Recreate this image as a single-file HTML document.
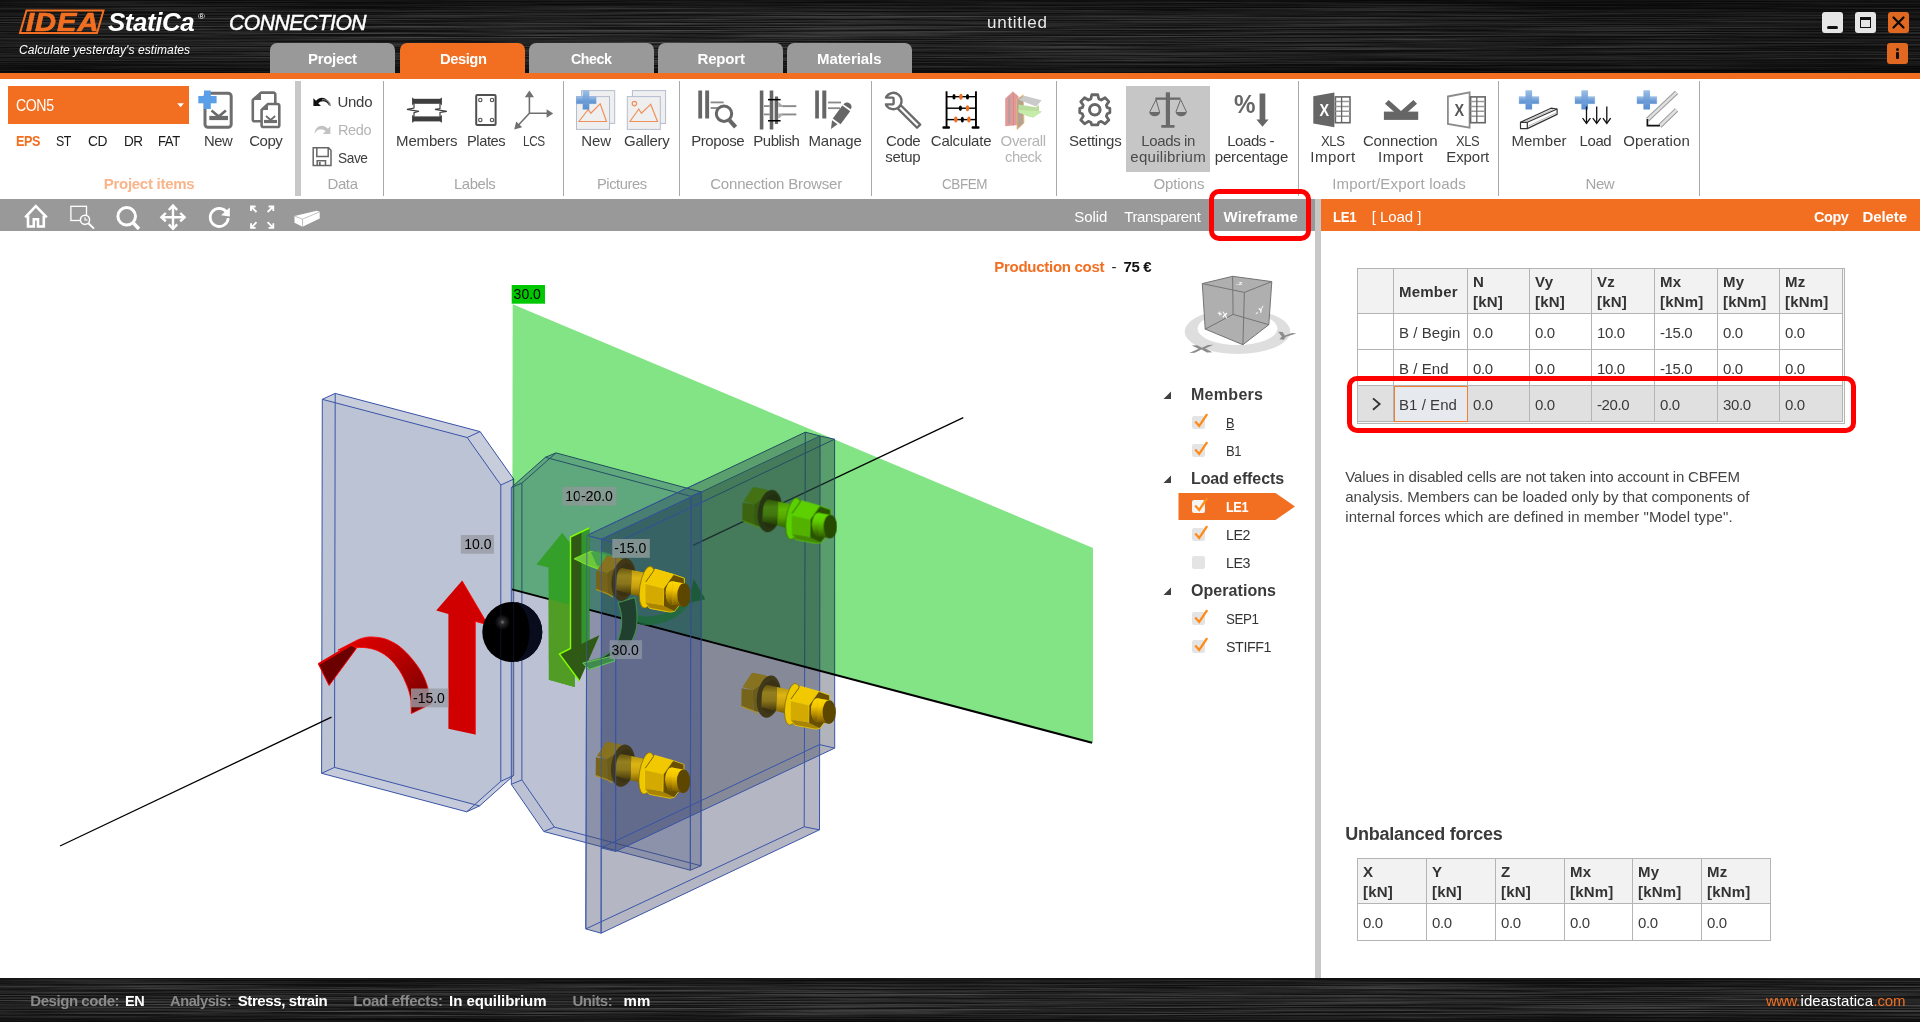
<!DOCTYPE html>
<html lang="en">
<head>
<meta charset="utf-8">
<title>IDEA StatiCa Connection - untitled</title>
<style>
*{box-sizing:border-box;margin:0;padding:0}
html,body{width:1920px;height:1022px;overflow:hidden;background:#fff}
body{position:relative;font-family:"Liberation Sans",sans-serif;font-size:15px;color:#333}
.abs{position:absolute}
.t{position:absolute;white-space:nowrap;line-height:1;display:block}
#titlebar{position:absolute;left:0;top:0;width:1920px;height:73px;background:#101010;overflow:hidden}
#orangeline{position:absolute;left:0;top:73px;width:1920px;height:6px;background:#f26f21}
.tab{position:absolute;top:43px;height:31px;width:125px;border-radius:7px 7px 0 0;background:#999}
.tab.active{background:#f26f21}
#ribbon{position:absolute;left:0;top:79px;width:1920px;height:120px;background:#fff}
.vsep{position:absolute;top:81px;width:1px;height:115px;background:#a9a9a9}
#toolbar{position:absolute;left:0;top:199px;width:1315px;height:32px;background:#999}
#splitter{position:absolute;left:1315px;top:199px;width:6px;height:779px;background:#c8c8c8}
#panelhead{position:absolute;left:1321px;top:199px;width:599px;height:32px;background:#f26f21}
#status{position:absolute;left:0;top:978px;width:1920px;height:44px;background:#141414;overflow:hidden}
table.grid{position:absolute;border-collapse:collapse;table-layout:fixed}
table.grid td,table.grid th{border:1px solid #b4b4b4;text-align:left;font-weight:400;overflow:hidden;white-space:nowrap;padding:0}
table.grid th{background:#f2f2f2;font-weight:700}
.hl{position:absolute;border:5px solid #ff0000;border-radius:10px}
.cb{position:absolute;width:13px;height:13px;background:#e4e4e4;border-radius:2px}
table.grid .c{display:block;position:relative;top:1px;padding-left:5px;font-size:15px;line-height:20px;letter-spacing:-0.4px;color:#3a3a3a}
table.grid .c.n{letter-spacing:0.05px}
table.grid th .c{color:#333;letter-spacing:0.2px}
</style>
</head>
<body>

<div id="titlebar">
<svg class="abs" style="left:0;top:0" width="1920" height="73" viewBox="0 0 1920 73">
<defs>
<filter id="brush" x="0" y="0" width="100%" height="100%" color-interpolation-filters="sRGB">
<feTurbulence type="fractalNoise" baseFrequency="0.004 0.8" numOctaves="4" seed="7" result="n"/>
<feColorMatrix in="n" type="matrix" values="0 0 0 0 0.36  0 0 0 0 0.36  0 0 0 0 0.36  1.5 0 0 0 -0.5"/>
</filter>
<linearGradient id="tbv" x1="0" y1="0" x2="0" y2="1"><stop offset="0" stop-color="#000" stop-opacity=".45"/><stop offset=".25" stop-color="#000" stop-opacity="0"/><stop offset=".8" stop-color="#000" stop-opacity="0"/><stop offset="1" stop-color="#000" stop-opacity=".6"/></linearGradient>
<linearGradient id="tbh" x1="0" y1="0" x2="1" y2="0"><stop offset="0" stop-color="#000" stop-opacity=".2"/><stop offset=".35" stop-color="#000" stop-opacity="0"/><stop offset=".7" stop-color="#000" stop-opacity=".15"/><stop offset="1" stop-color="#000" stop-opacity=".35"/></linearGradient>
</defs>
<rect width="1920" height="73" fill="#121212"/>
<rect width="1920" height="73" fill="#6a6a6a" filter="url(#brush)"/>
<rect width="1920" height="73" fill="url(#tbv)"/>
<rect width="1920" height="73" fill="url(#tbh)"/>
</svg>
<svg class="abs" style="left:18px;top:9px" width="90" height="26" viewBox="0 0 90 26">
<polygon points="8.5,1.5 85.5,1.5 79,24 2,24" fill="none" stroke="#f26f21" stroke-width="2"/>
</svg><span class="t" style="left:25.5px;top:9px;font-size:26px;font-weight:700;color:#f26f21;letter-spacing:0.90px;transform:scaleX(1.118);transform-origin:0 0;font-style:italic;-webkit-text-stroke:0.7px #f26f21;">IDEA</span><span class="t" style="left:108.0px;top:9px;font-size:26px;font-weight:700;color:#fff;letter-spacing:-0.45px;transform:scaleX(0.996);transform-origin:0 0;font-style:italic;">StatiCa</span><span class="t" style="left:198.0px;top:13px;font-size:8px;color:#fff;letter-spacing:0.90px;transform:scaleX(1.185);transform-origin:0 0;">&reg;</span><span class="t" style="left:229.0px;top:12px;font-size:22px;color:#fff;letter-spacing:-0.45px;transform:scaleX(0.956);transform-origin:0 0;font-style:italic;-webkit-text-stroke:0.5px #fff;">CONNECTION</span><span class="t" style="left:19.0px;top:44px;font-size:12px;color:#fff;letter-spacing:0.09px;font-style:italic;">Calculate yesterday's estimates</span><span class="t" style="left:987.0px;top:14px;font-size:17px;color:#e8e8e8;letter-spacing:0.74px;">untitled</span><div class="abs" style="left:1822px;top:12px;width:21px;height:21px;background:#e6e6e6;border-radius:3px"><div class="abs" style="left:5px;top:14px;width:11px;height:3px;border-radius:1.5px;background:#111"></div></div>
<div class="abs" style="left:1855px;top:12px;width:21px;height:21px;background:#e6e6e6;border-radius:3px"><div class="abs" style="left:5px;top:5px;width:11px;height:11px;border:1.5px solid #111;border-top-width:3px"></div></div>
<div class="abs" style="left:1888px;top:12px;width:21px;height:21px;background:#e06820;border-radius:3px"><svg class="abs" style="left:0;top:0" width="21" height="21"><path d="M5.5 5.5 L15.5 15.5 M15.5 5.5 L5.5 15.5" stroke="#0a0a0a" stroke-width="2.2" stroke-linecap="round"/></svg></div>
<div class="abs" style="left:1887px;top:43px;width:21px;height:21px;background:#e06820;border-radius:3px"><div class="abs" style="left:9px;top:5px;width:3px;height:3px;border-radius:1.5px;background:#111"></div><div class="abs" style="left:9px;top:9px;width:3px;height:7px;border-radius:1px;background:#111"></div></div>
</div><div class="tab" style="left:270px"></div><span class="t" style="left:308.1px;top:51px;font-size:15px;font-weight:700;color:#fff;letter-spacing:-0.34px;">Project</span><div class="tab active" style="left:400px"></div><span class="t" style="left:439.7px;top:51px;font-size:15px;font-weight:700;color:#fff;letter-spacing:-0.45px;transform:scaleX(0.982);transform-origin:0 0;">Design</span><div class="tab" style="left:529px"></div><span class="t" style="left:571.0px;top:51px;font-size:15px;font-weight:700;color:#fff;letter-spacing:-0.45px;transform:scaleX(0.948);transform-origin:0 0;">Check</span><div class="tab" style="left:658px"></div><span class="t" style="left:697.5px;top:51px;font-size:15px;font-weight:700;color:#fff;letter-spacing:-0.17px;">Report</span><div class="tab" style="left:787px"></div><span class="t" style="left:817.0px;top:51px;font-size:15px;font-weight:700;color:#fff;letter-spacing:-0.07px;">Materials</span><div id="orangeline"></div><div id="ribbon"></div><div class="abs" style="left:8px;top:86px;width:181px;height:38px;background:#f26f21"></div><span class="t" style="left:16.2px;top:98px;font-size:16px;color:#fff;letter-spacing:-0.45px;transform:scaleX(0.882);transform-origin:0 0;">CON5</span><svg class="abs" style="left:176.5px;top:102.6px" width="9" height="5"><polygon points="0.3,0.3 6.9,0.3 3.6,4.2" fill="#fff"/></svg><span class="t" style="left:16.3px;top:133px;font-size:15px;font-weight:700;color:#f26f21;letter-spacing:-0.45px;transform:scaleX(0.841);transform-origin:0 0;">EPS</span><span class="t" style="left:56.3px;top:133px;font-size:15px;color:#1a1a1a;letter-spacing:-0.45px;transform:scaleX(0.823);transform-origin:0 0;">ST</span><span class="t" style="left:88.0px;top:133px;font-size:15px;color:#1a1a1a;letter-spacing:-0.45px;transform:scaleX(0.919);transform-origin:0 0;">CD</span><span class="t" style="left:123.7px;top:133px;font-size:15px;color:#1a1a1a;letter-spacing:-0.45px;transform:scaleX(0.900);transform-origin:0 0;">DR</span><span class="t" style="left:158.3px;top:133px;font-size:15px;color:#1a1a1a;letter-spacing:-0.45px;transform:scaleX(0.871);transform-origin:0 0;">FAT</span><span class="t" style="left:203.7px;top:133px;font-size:15px;color:#3c3c3c;letter-spacing:-0.45px;transform:scaleX(0.989);transform-origin:0 0;">New</span><span class="t" style="left:249.2px;top:133px;font-size:15px;color:#3c3c3c;letter-spacing:-0.45px;">Copy</span><span class="t" style="left:103.7px;top:176px;font-size:15px;font-weight:700;color:#f9b48a;letter-spacing:-0.27px;">Project items</span><div class="abs" style="left:295px;top:81px;width:6px;height:115px;background:#c8c8c8"></div><span class="t" style="left:337.5px;top:94px;font-size:15px;color:#3c3c3c;letter-spacing:-0.29px;">Undo</span><span class="t" style="left:337.5px;top:122px;font-size:15px;color:#b4b4b4;letter-spacing:-0.45px;transform:scaleX(0.971);transform-origin:0 0;">Redo</span><span class="t" style="left:337.5px;top:150px;font-size:15px;color:#3c3c3c;letter-spacing:-0.45px;transform:scaleX(0.913);transform-origin:0 0;">Save</span><span class="t" style="left:327.5px;top:176px;font-size:15px;color:#a6a6a6;letter-spacing:-0.40px;">Data</span><div class="vsep" style="left:383px"></div><div class="vsep" style="left:563px"></div><div class="vsep" style="left:679px"></div><div class="vsep" style="left:871px"></div><div class="vsep" style="left:1056px"></div><div class="vsep" style="left:1298px"></div><div class="vsep" style="left:1498px"></div><div class="vsep" style="left:1699px"></div><span class="t" style="left:396.1px;top:133px;font-size:15px;color:#3c3c3c;letter-spacing:-0.17px;">Members</span><span class="t" style="left:467.2px;top:133px;font-size:15px;color:#3c3c3c;letter-spacing:-0.45px;transform:scaleX(0.978);transform-origin:0 0;">Plates</span><span class="t" style="left:523.2px;top:133px;font-size:15px;color:#3c3c3c;letter-spacing:-0.45px;transform:scaleX(0.785);transform-origin:0 0;">LCS</span><span class="t" style="left:581.3px;top:133px;font-size:15px;color:#3c3c3c;letter-spacing:-0.16px;">New</span><span class="t" style="left:624.0px;top:133px;font-size:15px;color:#3c3c3c;letter-spacing:-0.29px;">Gallery</span><span class="t" style="left:691.2px;top:133px;font-size:15px;color:#3c3c3c;letter-spacing:-0.41px;">Propose</span><span class="t" style="left:753.2px;top:133px;font-size:15px;color:#3c3c3c;letter-spacing:-0.43px;">Publish</span><span class="t" style="left:808.4px;top:133px;font-size:15px;color:#3c3c3c;letter-spacing:-0.16px;">Manage</span><span class="t" style="left:886.0px;top:133px;font-size:15px;color:#3c3c3c;letter-spacing:-0.39px;">Code</span><span class="t" style="left:885.3px;top:149px;font-size:15px;color:#3c3c3c;letter-spacing:-0.33px;">setup</span><span class="t" style="left:930.8px;top:133px;font-size:15px;color:#3c3c3c;letter-spacing:-0.23px;">Calculate</span><span class="t" style="left:1069.1px;top:133px;font-size:15px;color:#3c3c3c;letter-spacing:-0.23px;">Settings</span><span class="t" style="left:1227.2px;top:133px;font-size:15px;color:#3c3c3c;letter-spacing:-0.44px;">Loads -</span><span class="t" style="left:1214.7px;top:149px;font-size:15px;color:#3c3c3c;letter-spacing:-0.15px;">percentage</span><span class="t" style="left:1320.7px;top:133px;font-size:15px;color:#3c3c3c;letter-spacing:-0.45px;transform:scaleX(0.874);transform-origin:0 0;">XLS</span><span class="t" style="left:1310.3px;top:149px;font-size:15px;color:#3c3c3c;letter-spacing:0.46px;">Import</span><span class="t" style="left:1362.9px;top:133px;font-size:15px;color:#3c3c3c;letter-spacing:-0.12px;">Connection</span><span class="t" style="left:1378.0px;top:149px;font-size:15px;color:#3c3c3c;letter-spacing:0.46px;">Import</span><span class="t" style="left:1455.9px;top:133px;font-size:15px;color:#3c3c3c;letter-spacing:-0.45px;transform:scaleX(0.863);transform-origin:0 0;">XLS</span><span class="t" style="left:1446.3px;top:149px;font-size:15px;color:#3c3c3c;letter-spacing:-0.09px;">Export</span><span class="t" style="left:1511.4px;top:133px;font-size:15px;color:#3c3c3c;letter-spacing:0.04px;">Member</span><span class="t" style="left:1579.6px;top:133px;font-size:15px;color:#3c3c3c;letter-spacing:-0.45px;">Load</span><span class="t" style="left:1623.3px;top:133px;font-size:15px;color:#3c3c3c;letter-spacing:0.07px;">Operation</span><span class="t" style="left:1000.6px;top:133px;font-size:15px;color:#b4b4b4;letter-spacing:-0.32px;">Overall</span><span class="t" style="left:1005.3px;top:149px;font-size:15px;color:#b4b4b4;letter-spacing:-0.45px;transform:scaleX(0.990);transform-origin:0 0;">check</span><div class="abs" style="left:1126px;top:86px;width:84px;height:86px;background:#c6c6c6"></div><span class="t" style="left:1141.3px;top:133px;font-size:15px;color:#4a4a4a;letter-spacing:-0.37px;">Loads in</span><span class="t" style="left:1130.3px;top:149px;font-size:15px;color:#4a4a4a;letter-spacing:0.28px;">equilibrium</span><span class="t" style="left:454.2px;top:176px;font-size:15px;color:#a6a6a6;letter-spacing:-0.45px;transform:scaleX(0.994);transform-origin:0 0;">Labels</span><span class="t" style="left:597.4px;top:176px;font-size:15px;color:#a6a6a6;letter-spacing:-0.45px;transform:scaleX(0.980);transform-origin:0 0;">Pictures</span><span class="t" style="left:710.2px;top:176px;font-size:15px;color:#a6a6a6;letter-spacing:-0.18px;">Connection Browser</span><span class="t" style="left:942.0px;top:176px;font-size:15px;color:#a6a6a6;letter-spacing:-0.45px;transform:scaleX(0.899);transform-origin:0 0;">CBFEM</span><span class="t" style="left:1153.5px;top:176px;font-size:15px;color:#a6a6a6;letter-spacing:-0.12px;">Options</span><span class="t" style="left:1332.2px;top:176px;font-size:15px;color:#a6a6a6;letter-spacing:0.20px;">Import/Export loads</span><span class="t" style="left:1585.6px;top:176px;font-size:15px;color:#a6a6a6;letter-spacing:-0.45px;">New</span><svg class="abs" id="ribicons" style="left:0;top:79px" width="1920" height="120" viewBox="0 79 1920 120" font-family="Liberation Sans, sans-serif">
<defs>
<linearGradient id="plusg" x1="0" y1="0" x2="0" y2="1"><stop offset="0" stop-color="#9dbfe6"/><stop offset=".5" stop-color="#6f9fd8"/><stop offset="1" stop-color="#5b8fd0"/></linearGradient>
<g id="plus"><rect x="0" y="6.4" width="19.8" height="7.1" fill="url(#plusg)"/><rect x="6.4" y="0" width="6.6" height="19.2" fill="url(#plusg)"/><rect x="0" y="6.4" width="19.8" height="7.1" fill="none" stroke="#7fa8dc" stroke-width=".6" opacity=".6"/></g>
</defs>
<!-- New connection -->
<g fill="none" stroke="#6e6e6e">
<rect x="205" y="93.3" width="26.2" height="34" rx="3" stroke-width="3"/>
<path d="M209.3,118h18.7" stroke-width="4.2" stroke="#6a6a6a"/>
<path d="M211.5,110.5l7.2,6 7.2,-6" stroke-width="2.6" stroke="#6a6a6a"/>
</g>
<rect x="198.3" y="96" width="18.3" height="7.3" fill="#5b9fe8"/><rect x="204" y="90.5" width="6.8" height="18.5" fill="#5b9fe8"/>
<!-- Copy -->
<g fill="#fff" stroke="#6e6e6e" stroke-width="2.6" stroke-linejoin="round">
<path d="M252.8,100 L261,92.6 H273.5 a1.8,1.8 0 0 1 1.8,1.8 V119.4 a1.8,1.8 0 0 1 -1.8,1.8 H254.6 a1.8,1.8 0 0 1 -1.8,-1.8 Z"/>
<path d="M252.8,100 L261,92.6 V100 Z" fill="#6e6e6e" stroke="none"/>
<path d="M261.6,110 L268,104 H277.5 a1.8,1.8 0 0 1 1.8,1.8 V125.2 a1.8,1.8 0 0 1 -1.8,1.8 H263.4 a1.8,1.8 0 0 1 -1.8,-1.8 Z"/>
<path d="M261.6,110 L268,104 V110 Z" fill="#6e6e6e" stroke="none"/>
<path d="M264,121.5h13" stroke-width="3.2"/>
<path d="M266,116l4.6,4 4.6,-4" stroke-width="1.8" fill="none"/>
</g>
<!-- Undo / Redo / Save -->
<path d="M313.4,98.2 V106 H321 L318.2,103.2 C321,100.3 326.5,100 329.2,105.8 C329.2,98.5 321,94.5 316,100.8 Z" fill="#111"/>
<path d="M322,99.8 C326.5,98.8 330,102 330.2,106" fill="none" stroke="#777" stroke-width="1.4"/>
<path d="M330.4,126.2 V134 H322.8 L325.6,131.2 C322.8,128.3 317.3,128 314.6,133.8 C314.6,126.5 322.8,122.5 327.8,128.8 Z" fill="#c2c2c2"/>
<g fill="none" stroke="#666" stroke-width="1.5">
<path d="M313.2,147.8 H328.5 L331,150.3 V165.6 H313.2 Z"/>
<path d="M316.8,148 V156.6 H328.2 V148"/>
<path d="M317.2,165.5 V160.8 H325.5 V165.5"/>
<path d="M319.8,162v3.5" stroke-width="1.8"/>
</g>
<!-- Members -->
<g fill="#3e3e3e">
<rect x="412.4" y="98.8" width="29.2" height="5" /><rect x="412.4" y="116.4" width="29.2" height="5"/>
<path d="M412.2,97.2l1.6,1.6v5l-1.6,1.6zM441.8,97.2l-1.6,1.6v5l1.6,1.6zM412.2,114.8l1.6,1.6v5l-1.6,1.6zM441.8,114.8l-1.6,1.6v5l1.6,1.6z"/>
<path d="M414,104 V108 L407,109.3 L419,111.3 L414,112.8 V116.4" fill="none" stroke="#3e3e3e" stroke-width="1.2"/>
<path d="M440,104 V108.5 L435,109.3 L446.8,111.3 L440,112.5 V116.4" fill="none" stroke="#3e3e3e" stroke-width="1.2"/>
</g>
<!-- Plates -->
<rect x="476.2" y="95" width="19.4" height="30" rx="1" fill="none" stroke="#505050" stroke-width="2"/>
<g fill="none" stroke="#505050" stroke-width="1.1"><circle cx="480.3" cy="100" r="1.7"/><circle cx="492" cy="100" r="1.7"/><circle cx="480.3" cy="120" r="1.7"/><circle cx="492" cy="120" r="1.7"/></g>
<!-- LCS -->
<g stroke="#707070" stroke-width="1.6" fill="#707070">
<path d="M529.4,113.2 V95 M529.4,113.2 H548 M529.4,113.2 L518,125.5" fill="none"/>
<path d="M529.4,90.6 l4.6,6.6 h-9.2z M553.2,113.5 l-6.6,4.3 v-8.6z M514.2,129.6 l2,-8 6,5.6z" stroke="none"/>
</g>
<!-- Pictures new -->
<g stroke="#b4bccf" stroke-width="1" fill="#efefef">
<rect x="581.5" y="90.6" width="33.2" height="32.8"/><rect x="576.5" y="96.6" width="33" height="32.8"/>
<rect x="632.4" y="90.6" width="33.2" height="32.8"/><rect x="627.3" y="96.6" width="33" height="32.8"/>
</g>
<g fill="none" stroke="#f0905a" stroke-width="1.2" stroke-linejoin="miter">
<path d="M578.9,121.5 L588.2,109.5 L590.8,113.2 L600.2,103.8 L606.5,121.5 Z"/>
<path d="M629.9,121.5 L638.8,109 L641.4,113.2 L650.7,104.3 L657.5,121.5 Z"/>
<circle cx="634.4" cy="103.6" r="2.2"/>
</g>
<use href="#plus" x="576.3" y="90.3"/>
<!-- Propose -->
<g fill="#666">
<rect x="698.3" y="90.5" width="3.8" height="28"/><rect x="705.2" y="90.5" width="3.9" height="28"/>
<rect x="710.6" y="101.5" width="13" height="1.8" fill="#888"/><rect x="710.6" y="107.1" width="7.4" height="1.8" fill="#888"/>
</g>
<circle cx="724" cy="113.7" r="7.7" fill="#fff" stroke="#666" stroke-width="3"/>
<path d="M729.6,120.3 L735.6,127.2" stroke="#666" stroke-width="4.2"/>
<!-- Publish -->
<g fill="#666">
<rect x="759.8" y="90.5" width="3.6" height="39"/><rect x="769.7" y="90.5" width="3.6" height="39"/>
<rect x="773.3" y="99.6" width="1.8" height="21" fill="#d0d0d0"/>
<rect x="774.9" y="96.5" width="3.2" height="27.5"/>
<rect x="764" y="105.2" width="5.7" height="1.8" fill="#8a8a8a"/><rect x="764" y="113.5" width="5.7" height="1.8" fill="#8a8a8a"/>
<rect x="781.7" y="105.2" width="14.6" height="1.9" fill="#8a8a8a"/><rect x="781.7" y="113.5" width="14.6" height="1.9" fill="#8a8a8a"/>
<path d="M778.2,102 C781,103 780.5,105.2 783,105.2 V107 H778.2Z M778.2,118.6 C781,117.6 780.5,115.4 783,115.4 V113.6 H778.2Z" fill="#aaa"/>
<rect x="768" y="98.9" width="12.6" height="1.5" fill="#000"/><rect x="768" y="120" width="12.6" height="1.5" fill="#000"/>
</g>
<!-- Manage -->
<g fill="#666">
<rect x="815.2" y="90.5" width="3.7" height="28"/><rect x="822.3" y="90.5" width="4" height="28"/>
<rect x="828" y="101.6" width="13" height="1.8" fill="#888"/><rect x="828" y="107.3" width="12" height="1.8" fill="#888"/>
<path d="M843.5,104.5 a4,4 0 0 1 6,-1.2 a4,4 0 0 1 1.2,6 Z" fill="#666" transform="rotate(0)"/>
<polygon points="842.3,105.6 850.2,111.2 840.6,124.2 832.8,118.6" />
<polygon points="832,120.2 837.5,124.2 831,128.9"/>
</g>
<!-- Code setup (wrench) -->
<g fill="#fff" stroke="#6a6a6a" stroke-width="2.3" stroke-linejoin="round">
<polygon points="900.8,105.2 920.2,124.6 917,127.8 897.6,108.4"/>
<path d="M885.9,97.6 A8.2,8.2 0 1 1 885.9,104.4 L892.6,104.4 Q893.6,104.4 893.6,103.4 L893.6,98.6 Q893.6,97.6 892.6,97.6 Z"/>
</g>
<!-- Calculate -->
<g fill="#000">
<rect x="945.6" y="91.3" width="1.9" height="36.5"/><rect x="975" y="91.3" width="1.9" height="36.5"/>
<rect x="942.4" y="126.2" width="7.6" height="2.6" rx="1"/><rect x="971.6" y="126.2" width="7.9" height="2.6" rx="1"/>
<rect x="946" y="96" width="30" height="1.4"/><rect x="946" y="107.5" width="30" height="1.4"/><rect x="946" y="118.9" width="30" height="1.4"/>
<ellipse cx="954" cy="96.7" rx="1.6" ry="2.8"/><ellipse cx="967.5" cy="96.7" rx="1.6" ry="2.8"/>
<ellipse cx="960.4" cy="108.2" rx="1.6" ry="2.8"/><ellipse cx="962.3" cy="119.6" rx="1.6" ry="2.8"/>
<g fill="#f07020"><ellipse cx="960.9" cy="96.7" rx="1.7" ry="3"/><ellipse cx="967.5" cy="108.2" rx="1.7" ry="3"/><ellipse cx="955.8" cy="119.6" rx="1.7" ry="3"/><ellipse cx="968.9" cy="119.6" rx="1.7" ry="3"/></g>
</g>
<!-- Overall check -->
<g transform="translate(930,84) scale(0.104167)">
<polygon points="722,140 795,72 850,118 850,392 722,405" fill="#e09a9a"/>
<polygon points="752,128 772,112 772,372 752,386" fill="#b89a9a"/>
<polygon points="795,72 805,100 805,395 795,400" fill="#d88888"/>
<polygon points="832,150 895,105 902,375 836,436" fill="#b4a294" stroke="#f2b870" stroke-width="8"/>
<polygon points="850,150 905,112 1072,156 1020,216" fill="#cacaca"/>
<polygon points="850,196 1020,222 1046,200 1046,258 1072,266 990,322 936,306 850,272" fill="#badc9c"/>
<polygon points="850,250 1046,258 1072,266 990,322 936,306 850,272" fill="#c6ecaa"/>
</g>
<!-- Settings gear -->
<g transform="translate(1094.8,109.8)" fill="#fff" stroke="#666" stroke-width="3" stroke-linejoin="round">
<path d="M-3.2,-16.2 H3.2 L4.3,-11.6 L6.9,-10.5 L11,-13 L15.1,-8.8 L12.4,-4.9 L13.4,-2.3 L16.2,-1.6 V3.2 L13.4,4.3 L12.4,6.9 L15.1,11 L11,15.1 L6.9,12.4 L4.3,13.4 L3.2,16.2 H-3.2 L-4.3,13.4 L-6.9,12.4 L-11,15.1 L-15.1,11 L-12.4,6.9 L-13.4,4.3 L-16.2,3.2 V-1.6 L-13.4,-2.3 L-12.4,-4.9 L-15.1,-8.8 L-11,-13 L-6.9,-10.5 L-4.3,-11.6 Z" transform="scale(.93)"/>
<circle cx="0" cy="0" r="5.3"/>
</g>
<!-- Loads in equilibrium -->
<g fill="#6a6a6a" stroke="none">
<rect x="1165.8" y="92.3" width="4.2" height="33.4"/><rect x="1155.4" y="97.5" width="25" height="2.3"/><rect x="1161.1" y="125.1" width="13.6" height="2.7" rx="1"/>
<path d="M1149.2,112.1 H1160.2 A5.5,4.2 0 0 1 1149.2,112.1Z M1175.7,112.1 H1186.7 A5.5,4.2 0 0 1 1175.7,112.1Z"/>
<path d="M1156,99.6 L1149.7,112.1 M1156,99.6 L1159.6,112.1 M1180.6,99.6 L1175.9,112.1 M1180.6,99.6 L1186.6,112.1" fill="none" stroke="#6a6a6a" stroke-width="1"/>
</g>
<!-- Loads percentage -->
<text x="1234" y="112.5" font-size="25" font-weight="700" fill="#666" textLength="21.5" lengthAdjust="spacingAndGlyphs">%</text>
<path d="M1259.6,93.6 H1265.3 V119.4 H1268.6 L1262.5,126.8 L1256.4,119.4 H1259.6Z" fill="#666"/>
<!-- XLS import -->
<polygon points="1313.3,96.3 1334.4,92.5 1334.4,127.2 1313.3,123.6" fill="#666"/>
<text x="1319.4" y="116" font-size="16" font-weight="700" fill="#fff" textLength="9.6" lengthAdjust="spacingAndGlyphs">X</text>
<g id="xgrid"><rect x="1335.4" y="96.9" width="14.6" height="25.8" fill="#fff" stroke="#666" stroke-width="1.6"/>
<path d="M1335.4,101.5h14.6M1335.4,106.4h14.6M1335.4,111.3h14.6M1335.4,116.2h14.6" stroke="#999" stroke-width="1.5"/><path d="M1341.6,97v25.6" stroke="#666" stroke-width="1.3"/></g>
<!-- Connection import -->
<g fill="#666"><rect x="1383.9" y="111.6" width="34.3" height="8.3"/><path d="M1385,103.8 L1388.6,100 L1401,110.9 L1413.4,100 L1417,103.8 L1401,118 Z"/></g>
<!-- XLS export -->
<polygon points="1447.9,96.5 1469.6,92.4 1469.6,127.6 1447.9,124" fill="#fff" stroke="#8c8c8c" stroke-width="1.8"/>
<text x="1454.5" y="116" font-size="16" font-weight="700" fill="#555" textLength="9.6" lengthAdjust="spacingAndGlyphs">X</text>
<use href="#xgrid" x="135.2"/>
<!-- Member -->
<use href="#plus" x="1519.1" y="90.3"/>
<g fill="#fff" stroke="#333" stroke-width="1.2" stroke-linejoin="round">
<polygon points="1520.5,122.3 1551,108.2 1557.1,109 1557.1,114.4 1527.3,128.6 1520.5,128.6"/>
<path d="M1520.5,122.3 H1527.3 V128.6 M1527.3,122.3 L1557.1,109" fill="none"/>
<path d="M1524,122 L1553,109.4 M1528.5,126 L1556,113" stroke="#999" stroke-width=".7" fill="none"/>
</g>
<!-- Load -->
<use href="#plus" x="1575" y="90.3"/>
<g stroke="#111" stroke-width="1.3" fill="none"><path d="M1586.5,106.4V123.2M1596.7,106.4V123.2M1606.8,106.4V123.2"/><path d="M1582.6,118.2l3.9,5.2 3.9,-5.2M1592.8,118.2l3.9,5.2 3.9,-5.2M1602.9,118.2l3.9,5.2 3.9,-5.2"/></g>
<!-- Operation -->
<use href="#plus" x="1637" y="90.3"/>
<g>
<path d="M1647.6,119.6 L1676.6,92.4" stroke="#9a9a9a" stroke-width="4.6"/><path d="M1647.6,119.6 L1676.6,92.4" stroke="#e0e0e0" stroke-width="2.6"/>
<path d="M1659.9,126 L1676.6,109.8" stroke="#9a9a9a" stroke-width="4.6"/><path d="M1659.9,126 L1676.6,109.8" stroke="#e0e0e0" stroke-width="2.6"/>
<path d="M1647.4,118.9 V125.7 H1659.9" stroke="#111" stroke-width="1.7" fill="none"/>
</g>
</svg>
<div id="toolbar"></div><span class="t" style="left:1074.3px;top:209px;font-size:15px;color:#fff;letter-spacing:-0.06px;">Solid</span><span class="t" style="left:1124.2px;top:209px;font-size:15px;color:#fff;letter-spacing:-0.36px;">Transparent</span><span class="t" style="left:1223.6px;top:209px;font-size:15px;font-weight:700;color:#fff;letter-spacing:0.12px;">Wireframe</span><svg class="abs" id="tbicons" style="left:0;top:199px" width="1315" height="32" viewBox="0 199 1315 32">
<g fill="none" stroke="#fff" stroke-width="2.6">
<path d="M25.2,217.3 L35.8,206.2 L46.8,217.3" stroke-linejoin="miter"/>
<path d="M28,215.5 V226.5 H33.8 V219.2 H38 V226.5 H43.8 V215.5"/>
</g>
<g fill="none" stroke="#fff">
<rect x="70.9" y="206.3" width="15.6" height="14.2" stroke-width="1.3"/>
<circle cx="85" cy="219.8" r="4.6" fill="#999" stroke-width="1.5"/>
<path d="M85,217.2V220H87.6" stroke-width="1.1"/>
<path d="M88.4,223.2 L94,228.6" stroke-width="2"/>
<circle cx="126.7" cy="216.3" r="8.8" stroke-width="3"/>
<path d="M133.4,223 L139,229" stroke-width="3.4"/>
<path d="M173,206.5V228M162.3,217.2H183.8" stroke-width="2.4"/>
<path d="M168.8,210 L173,205.6 L177.2,210M168.8,224.4 L173,228.8 L177.2,224.4M165.8,213 L161.4,217.2 L165.8,221.4M180.2,213 L184.6,217.2 L180.2,221.4" stroke-width="2.4"/>
<path d="M226.8,212.6 A9,9 0 1 0 228.2,218.2" stroke-width="2.8"/>
</g>
<polygon points="229.8,207.6 229.8,216.6 221,215.2" fill="#fff"/>
<g fill="none" stroke="#fff" stroke-width="1.8">
<path d="M256.5,212 L251.2,206.6 M251,211V206.5H255.6 M267.6,212 L273.2,206.6 M268.6,206.5H273.3V211 M256.5,222.2 L251.2,227.8 M251,223.2V227.8H255.6 M267.6,222.2 L273.2,227.8 M268.6,227.8H273.3V223.2"/>
</g>
<polygon points="294.5,216 316.7,210.7 319.7,211.8 319.7,218.5 302.5,226.8 294.5,222.7" fill="#fff"/>
<path d="M294.5,216 L302.5,219.2 L319.7,211.8 M302.5,219.2 V226.8" fill="none" stroke="#b0b0b0" stroke-width=".8"/>
</svg>
<div id="splitter"></div><div id="panelhead"></div><span class="t" style="left:1333.3px;top:209px;font-size:15px;font-weight:700;color:#fff;letter-spacing:-0.45px;transform:scaleX(0.883);transform-origin:0 0;">LE1</span><span class="t" style="left:1371.7px;top:209px;font-size:15px;color:#fff;letter-spacing:-0.05px;">[ Load ]</span><span class="t" style="left:1814.0px;top:209px;font-size:15px;font-weight:700;color:#fff;letter-spacing:-0.45px;transform:scaleX(0.965);transform-origin:0 0;">Copy</span><span class="t" style="left:1862.5px;top:209px;font-size:15px;font-weight:700;color:#fff;letter-spacing:-0.11px;">Delete</span><div class="hl" style="left:1209px;top:189px;width:102px;height:52px"></div><span class="t" style="left:994.3px;top:259px;font-size:15px;font-weight:700;color:#f26f21;letter-spacing:-0.28px;">Production cost</span><span class="t" style="left:1111.5px;top:259px;font-size:15px;color:#222;">-</span><span class="t" style="left:1123.4px;top:259px;font-size:15px;font-weight:700;color:#111;letter-spacing:-0.33px;">75 &euro;</span><svg class="abs" id="scene" style="left:0;top:231px" width="1315" height="747" viewBox="0 231 1315 747" font-family="Liberation Sans, sans-serif">
<defs>
<linearGradient id="shaft" x1="0" y1="0" x2="0" y2="1"><stop offset="0" stop-color="#6e5200"/><stop offset=".35" stop-color="#d9a800"/><stop offset=".55" stop-color="#c89a00"/><stop offset="1" stop-color="#5e4600"/></linearGradient>
<linearGradient id="tipg" x1="0" y1="0" x2="0" y2="1"><stop offset="0" stop-color="#8a6800"/><stop offset=".3" stop-color="#f0c000"/><stop offset=".6" stop-color="#d0a000"/><stop offset="1" stop-color="#6a5000"/></linearGradient>
<radialGradient id="sph" cx=".335" cy=".335" r=".13"><stop offset="0" stop-color="#7a7a7a"/><stop offset=".3" stop-color="#2a2a2a"/><stop offset="1" stop-color="#000"/></radialGradient>
<linearGradient id="redarc" x1="0" y1="0" x2="1" y2="1"><stop offset="0" stop-color="#e60000"/><stop offset=".4" stop-color="#c00000"/><stop offset="1" stop-color="#6a0000"/></linearGradient>
<linearGradient id="shd" x1="0" y1="0" x2="0" y2="1"><stop offset="0" stop-color="#66550f"/><stop offset=".3" stop-color="#94801f"/><stop offset=".6" stop-color="#8a761c"/><stop offset="1" stop-color="#43380a"/></linearGradient>
<linearGradient id="shb" x1="0" y1="0" x2="0" y2="1"><stop offset="0" stop-color="#b8960c"/><stop offset=".3" stop-color="#dcb614"/><stop offset=".6" stop-color="#c8a010"/><stop offset="1" stop-color="#6e5800"/></linearGradient>
<linearGradient id="tipb" x1="0" y1="0" x2="0" y2="1"><stop offset="0" stop-color="#ffd800"/><stop offset=".35" stop-color="#f2c400"/><stop offset=".7" stop-color="#b08800"/><stop offset="1" stop-color="#6a5000"/></linearGradient>
<clipPath id="cg"><polygon points="512.7,304.3 1093,548 1093,743 512.3,589.4"/></clipPath>
<clipPath id="c2"><polygon points="511.3,487.5 545.4,457.3 556,452.9 701.3,492 701,865.8 690.3,870.2 543.8,831.5 511.3,784.3"/></clipPath>
<g id="bolt" transform="translate(730,660) scale(0.078278)">
  <polygon points="160,345 275,170 300,163 455,195 560,260 420,300 290,385" fill="#86721f"/>
  <polygon points="148,360 290,385 300,648 145,592" fill="#76641b"/>
  <polygon points="290,385 420,300 520,300 520,700 300,648" fill="#6c5c19"/>
  <path d="M145,592 L300,650 L360,690" fill="none" stroke="#b09018" stroke-width="14"/>
  <ellipse cx="495" cy="468" rx="150" ry="272" transform="rotate(9 495 468)" fill="#41381a"/>
  <ellipse cx="520" cy="470" rx="118" ry="215" transform="rotate(9 520 470)" fill="#3b3216"/>
  <path d="M405,470 C410,380 440,325 475,318 L600,345 L590,652 L400,600 Z" fill="url(#shd)"/>
  <polygon points="600,345 775,382 775,695 720,682 590,652" fill="url(#shb)"/>
  <ellipse cx="800" cy="565" rx="96" ry="268" transform="rotate(9 800 565)" fill="#f0c800" stroke="#7a6000" stroke-width="8"/>
  <polygon points="770,512 900,335 1135,402 1010,578" fill="#f2c800"/>
  <polygon points="770,516 1010,578 1005,803 770,762" fill="#d4aa00"/>
  <polygon points="1010,578 1135,402 1272,450 1278,705 1150,872 1005,805" fill="#685000"/>
  <polygon points="770,762 1005,803 1150,872 1095,884 830,834" fill="#a88400"/>
  <path d="M770,516 L900,335 L1135,402 L1272,450 L1278,705 L1150,872 L1095,884 L830,834 L770,762 Z M1010,578 L1135,402 M1010,578 L1005,803 M770,516 L1010,578" fill="none" stroke="#f7d400" stroke-width="9" stroke-linejoin="round"/>
  <path d="M778,500 L885,350" fill="none" stroke="#5a4500" stroke-width="10"/>
  <ellipse cx="1120" cy="640" rx="85" ry="150" fill="#d8ac00"/>
  <polygon points="1120,490 1268,515 1268,815 1120,790" fill="url(#tipb)"/>
  <path d="M1035,640 A85,150 0 0 0 1120,790 L1120,490 A85,150 0 0 0 1035,640Z" fill="url(#tipb)"/>
  <ellipse cx="1268" cy="665" rx="85" ry="150" fill="#5c4600"/>
</g>
</defs>
<!-- axis -->
<line x1="693" y1="545.4" x2="963.3" y2="417.6" stroke="#000" stroke-width="1.3"/>
<!-- plate 1 -->
<g stroke="#3a55a8" stroke-width="1" stroke-linejoin="round">
<polygon points="322.3,399.3 335.2,393.4 480.1,431.6 513.7,479.1 513.7,775.4 479.6,805.9 466.7,811.8 321.6,773.3" fill="#bcc3d5" stroke="none"/>
<polygon points="322.3,399.3 335.2,393.4 480.1,431.6 513.7,479.1 500.8,485 467.2,437.5" fill="#c8cddc" stroke="none"/>
<polygon points="321.6,773.3 334.5,767.4 479.6,805.9 513.7,775.4 500.8,781.3 466.7,811.8" fill="#c6cbdb" stroke="none"/>
<polygon points="322.3,399.3 467.2,437.5 500.8,485 500.8,781.3 466.7,811.8 321.6,773.3" fill="none"/>
<polygon points="335.2,393.4 480.1,431.6 513.7,479.1 513.7,775.4 479.6,805.9 334.5,767.4" fill="none"/>
<path d="M322.3,399.3L335.2,393.4M467.2,437.5L480.1,431.6M500.8,485L513.7,479.1M500.8,781.3L513.7,775.4M466.7,811.8L479.6,805.9M321.6,773.3L334.5,767.4" fill="none"/>
</g>
<line x1="60" y1="846" x2="331.5" y2="717.2" stroke="#000" stroke-width="1.3"/>
<!-- plate 2 -->
<g stroke="#3a55a8" stroke-width="1" stroke-linejoin="round">
<polygon points="511.3,487.5 545.4,457.3 556,452.9 701.3,492 701,865.8 690.3,870.2 543.8,831.5 511.3,784.3" fill="rgba(88,103,148,.4)" stroke="none"/>
<polygon points="511.3,487.5 545.4,457.3 690.9,496.3 690.3,870.2 543.8,831.5 511.3,784.3" fill="none"/>
<polygon points="521.9,483.1 556,452.9 701.3,492 701,865.8 554.4,827.1 521.9,779.9" fill="none"/>
<path d="M511.3,487.5L521.9,483.1M545.4,457.3L556,452.9M690.9,496.3L701.3,492M690.3,870.2L701,865.8M543.8,831.5L554.4,827.1M511.3,784.3L521.9,779.9" fill="none"/>
</g>
<!-- plate 3 & 4 -->
<g stroke="#3a55a8" stroke-width="1" stroke-linejoin="round">
<polygon points="586.9,535.5 805.3,432.2 820.1,436 819.5,829.8 601.1,933.2 585.8,928.9" fill="rgba(68,75,105,.4)" stroke="none"/>
<polygon points="601.5,539.2 820.5,436.4 834.6,439.2 834.7,748.1 615.6,851.4 601.1,847.9" fill="rgba(63,68,88,.4)" stroke="none"/>
<polygon points="586.9,535.5 805.3,432.2 804.2,826.8 585.8,928.9" fill="none"/>
<polygon points="601.5,539.2 820.1,436 819.5,829.8 601.1,933.2" fill="none"/>
<path d="M586.9,535.5L601.5,539.2M805.3,432.2L820.1,436M804.2,826.8L819.5,829.8M585.8,928.9L601.1,933.2" fill="none"/>
<polygon points="615.8,543 834.6,439.2 834.7,748.1 615.6,851.4" fill="none"/>
<path d="M601.5,539.2L615.8,543M820.1,436L834.6,439.2M819.5,744.6L834.7,748.1M601.1,847.9L615.6,851.4M601.1,847.9L819.5,744.6" fill="none"/>
</g>
<g clip-path="url(#c2)"><polygon points="601.5,539.2 820.5,436.4 834.6,439.2 834.7,748.1 615.6,851.4 601.1,847.9" fill="rgba(40,70,160,.15)"/></g>
<!-- bolt behind green plane -->
<!-- green plane -->
<polygon points="512.7,304.3 1093,548 1093,743 512.3,589.4" fill="#82e484" style="mix-blend-mode:multiply"/>
<g clip-path="url(#cg)">
<polygon points="511.3,487.5 545.4,457.3 556,452.9 701.3,492 701,865.8 690.3,870.2 543.8,831.5 511.3,784.3" fill="rgba(90,120,255,.10)"/>
<polygon points="586.9,535.5 805.3,432.2 820.1,436 834.6,439.2 834.7,748.1 819.5,755 819.5,829.8 601.1,933.2 585.8,928.9" fill="rgba(90,120,255,.07)"/>
</g>
<line x1="512" y1="589.4" x2="1092" y2="742.7" stroke="#000" stroke-width="2"/>
<g style="filter:hue-rotate(36deg) saturate(1.15) brightness(.86)"><use href="#bolt" transform="translate(1,-185.6)"/></g>
<!-- bolts in front -->
<use href="#bolt" transform="translate(-145.3,-117)"/>
<use href="#bolt"/>
<use href="#bolt" transform="translate(-145.7,69.1)"/>
<!-- red arrows -->
<polygon points="462,580.8 487.8,624.7 475.2,621.3 475.2,734.5 448.4,728.7 448.4,614 436.2,610.6" fill="#d00000"/>
<path d="M462,580.8 L487.8,624.7 L475.2,621.3 L475.2,734.5" fill="none" stroke="#f00" stroke-width="1"/>
<path d="M337.9,650.1 L356.4,640.5 C361,638 366,637 370.5,636.9 C375.5,637 380,637.5 384.6,638.7 C390,640.5 394.5,643 398.6,645.7 C404,650 408.5,654.5 412.7,659.8 C417,665 420.5,670 423.3,675.7 C425.8,681 427.5,686 428.6,691.5 L431.2,703.9 L411.3,713.6 L411,700.4 C410,694 408.2,688 405.7,682.7 C403.5,677 400.5,671.5 396.9,666.9 C393.5,662 389.5,658 384.6,654.6 C380,651.5 375.5,649.5 370.5,648.4 C366,647.5 361,647.2 356.4,647.5 L351,650 Z" fill="url(#redarc)" stroke="#f00" stroke-width=".8"/>
<polygon points="318.5,664.2 351.1,644.9 356.4,648.4 329.1,685.4" fill="#6a0000" stroke="#f00" stroke-width="1"/>
<path d="M318.5,664.2 L351.1,644.9" stroke="#e00000" stroke-width="2.2"/>
<!-- sphere -->
<circle cx="512.3" cy="632" r="30" fill="url(#sph)"/>
<path d="M512.3,602 A30,30 0 0 1 512.3,662 A17.2,30 0 0 0 512.3,602 Z" fill="#080c1c"/>
<path d="M500.8,606 V658 M513.7,603 V661" stroke="#1a2a66" stroke-width=".6" opacity=".6"/>
<!-- green arrows -->
<polygon points="562.3,532.7 536.4,564.4 548.5,567.6 548.9,679.8 574.7,686.9 574.7,549" fill="#34a02a"/>
<polygon points="548.7,599 574.7,606 574.7,686.9 548.9,679.8" fill="#509c24"/>
<polygon points="570.5,537 589.3,528 589.3,640 599.4,635.2 579.4,681 559.4,654 570.5,648.5" fill="#2e5a16"/>
<polygon points="581.5,532 589.3,528 589.3,640 581.5,644" fill="#33962c"/>
<path d="M589.3,528 L570.5,537 L570.5,648.5 L559.4,654 L579.4,681" fill="none" stroke="#80ff00" stroke-width="1.4"/>
<!-- green moment ring -->
<g transform="translate(530,520) scale(0.17609)">
<path d="M900,480 C860,545 760,600 650,598 C620,596 600,580 588,560 L565,515 C600,540 640,552 680,548 C760,542 850,498 890,450 Z" fill="#1d6a3a" fill-opacity=".8"/>
<polygon points="930,335 995,450 900,472" fill="#1c5a38"/>
<path d="M500,470 C530,540 525,620 500,680 C480,730 440,768 395,785 L300,812 L335,848 L470,798 C540,760 590,690 605,610 C612,540 605,480 595,440 Z" fill="#213f2e" stroke="#3f9048" stroke-width="6"/>
<polygon points="250,220 345,178 430,200 405,285 330,258" fill="#6cc83a" stroke="#84f020" stroke-width="5"/>
<polygon points="300,813 470,772 482,800 338,848" fill="#3f8a4c" stroke="#6fd05a" stroke-width="5"/>
<path d="M345,180 C400,170 440,185 470,200 L440,290 C420,270 400,262 380,258Z" fill="#3f9a50" fill-opacity=".8"/>
</g>
<!-- redraw bolt 1 on top of ring -->
<use href="#bolt" transform="translate(-145.3,-117)"/>
<!-- plate edges over arrows/bolts -->
<g stroke="#3a55a8" stroke-width="1" fill="none" opacity=".75">
<path d="M586.9,535.5 L585.8,928.9 M601.5,539.2 L601.1,933.2 M615.8,543 L615.6,851.4 M586.9,535.5 L601.5,539.2 L615.8,543 M690.9,496.3 L690.3,870.2 M701.3,492 L701,865.8 M586.9,535.5 L700,482 M601.5,539.2 L705,490.5 M615.8,543 L712,497.5"/>
</g>
<!-- labels -->
<g font-size="14" fill="#000">
<rect x="511.7" y="285" width="33.3" height="18.7" fill="#00c800"/><text x="513.6" y="299.3">30.0</text>
<rect x="460.8" y="535" width="33.1" height="18.7" fill="#9a9da6" fill-opacity=".85"/><text x="464.2" y="549.3">10.0</text>
<rect x="562.3" y="486.8" width="32.4" height="18.8" fill="#8c9a96" fill-opacity=".8"/><text x="565.3" y="501.1">10.0</text>
<rect x="579.4" y="486.8" width="37" height="18.8" fill="#8c9a96" fill-opacity=".8"/><text x="581" y="501.1">-20.0</text>
<rect x="411" y="688.5" width="37.4" height="18.8" fill="#9a9da6" fill-opacity=".8"/><text x="413" y="702.8">-15.0</text>
<rect x="612.3" y="539" width="37.5" height="18.8" fill="#8c9a96" fill-opacity=".85"/><text x="614.3" y="553.3">-15.0</text>
<rect x="609.7" y="640.2" width="32.4" height="18.8" fill="#8a90a2" fill-opacity=".85"/><text x="611.6" y="654.5">30.0</text>
</g>
</svg>
<svg class="abs" id="navcube" style="left:1170px;top:265px" width="140" height="100" viewBox="1170 265 140 100" font-family="Liberation Sans, sans-serif">
<path d="M1184.7,331.5 a52.8,22.5 0 1 0 105.6,0 a52.8,22.5 0 1 0 -105.6,0 Z M1197.5,328.5 a40,16.5 0 1 1 80,0 a40,16.5 0 1 1 -80,0 Z" fill="#dedede" fill-rule="evenodd"/>
<polygon points="1202.3,283.6 1232.6,276.3 1271.8,281.6 1268.8,324.7 1242.9,344.7 1205.2,329.1" fill="#afafaf"/>
<g fill="none" stroke="#747474" stroke-width="1" stroke-linejoin="round">
<polygon points="1202.3,283.6 1232.6,276.3 1271.8,281.6 1244.4,292.4"/>
<path d="M1202.3,283.6 L1205.2,329.1 L1242.9,344.7 L1268.8,324.7 L1271.8,281.6 M1244.4,292.4 L1242.9,344.7 M1232.6,276.3 L1233.1,314.4 L1205.2,329.1 M1233.1,314.4 L1268.8,324.7"/>
</g>
<g fill="#fff" font-size="8" font-weight="700">
<text transform="translate(1217.5,315.5) skewY(18)" >+X</text>
<text transform="translate(1255.5,316) skewY(-32)">-Y</text>
<text transform="translate(1236,284.8) scale(1,.5)" font-size="7">-Z</text>
</g>
<g fill="#8c8c8c" font-size="13" font-weight="700">
<text transform="translate(1189,353) scale(2.7,.85) skewX(-10) rotate(-6)">X</text>
<text transform="translate(1272,338.5) scale(2.3,.8) rotate(16)">Y</text>
</g>
</svg>
<svg class="abs" style="left:1163px;top:391px" width="9" height="9"><polygon points="8,0.5 8,8 0.5,8" fill="#404040"/></svg><span class="t" style="left:1191.0px;top:387px;font-size:16px;font-weight:700;color:#3a3a3a;letter-spacing:0.29px;">Members</span><div class="cb" style="left:1192px;top:416px;"></div><svg class="abs" style="left:1191.5px;top:412px" width="18" height="18"><path d="M3.2 9.6 L7.2 14 L15.2 2.2" fill="none" stroke="#ff8a18" stroke-width="2.3"/></svg><span class="t" style="left:1225.5px;top:415px;font-size:15px;letter-spacing:-0.45px;transform:scaleX(0.849);transform-origin:0 0;text-decoration:underline;">B</span><div class="cb" style="left:1192px;top:444px;"></div><svg class="abs" style="left:1191.5px;top:440px" width="18" height="18"><path d="M3.2 9.6 L7.2 14 L15.2 2.2" fill="none" stroke="#ff8a18" stroke-width="2.3"/></svg><span class="t" style="left:1225.5px;top:443px;font-size:15px;letter-spacing:-0.45px;transform:scaleX(0.865);transform-origin:0 0;">B1</span><svg class="abs" style="left:1163px;top:475px" width="9" height="9"><polygon points="8,0.5 8,8 0.5,8" fill="#404040"/></svg><span class="t" style="left:1191.0px;top:471px;font-size:16px;font-weight:700;color:#3a3a3a;letter-spacing:-0.11px;">Load effects</span><svg class="abs" style="left:1178px;top:493px" width="118" height="27"><polygon points="0.5,0 97.5,0 117,13.5 97.5,27 0.5,27" fill="#f26f21"/></svg><div class="cb" style="left:1192px;top:500px;background:#f4f4f4;"></div><svg class="abs" style="left:1191.5px;top:496px" width="18" height="18"><path d="M3.2 9.6 L7.2 14 L15.2 2.2" fill="none" stroke="#ff8a18" stroke-width="2.3"/></svg><span class="t" style="left:1225.5px;top:499px;font-size:15px;font-weight:700;color:#fff;letter-spacing:-0.45px;transform:scaleX(0.845);transform-origin:0 0;">LE1</span><div class="cb" style="left:1192px;top:528px;"></div><svg class="abs" style="left:1191.5px;top:524px" width="18" height="18"><path d="M3.2 9.6 L7.2 14 L15.2 2.2" fill="none" stroke="#ff8a18" stroke-width="2.3"/></svg><span class="t" style="left:1225.5px;top:527px;font-size:15px;letter-spacing:-0.45px;transform:scaleX(0.949);transform-origin:0 0;">LE2</span><div class="cb" style="left:1192px;top:556px;"></div><span class="t" style="left:1225.5px;top:555px;font-size:15px;letter-spacing:-0.45px;transform:scaleX(0.949);transform-origin:0 0;">LE3</span><svg class="abs" style="left:1163px;top:587px" width="9" height="9"><polygon points="8,0.5 8,8 0.5,8" fill="#404040"/></svg><span class="t" style="left:1191.0px;top:583px;font-size:16px;font-weight:700;color:#3a3a3a;letter-spacing:0.06px;">Operations</span><div class="cb" style="left:1192px;top:612px;"></div><svg class="abs" style="left:1191.5px;top:608px" width="18" height="18"><path d="M3.2 9.6 L7.2 14 L15.2 2.2" fill="none" stroke="#ff8a18" stroke-width="2.3"/></svg><span class="t" style="left:1225.5px;top:611px;font-size:15px;letter-spacing:-0.45px;transform:scaleX(0.892);transform-origin:0 0;">SEP1</span><div class="cb" style="left:1192px;top:640px;"></div><svg class="abs" style="left:1191.5px;top:636px" width="18" height="18"><path d="M3.2 9.6 L7.2 14 L15.2 2.2" fill="none" stroke="#ff8a18" stroke-width="2.3"/></svg><span class="t" style="left:1225.5px;top:639px;font-size:15px;letter-spacing:-0.45px;transform:scaleX(0.953);transform-origin:0 0;">STIFF1</span><div class="abs" style="left:1357px;top:268px;width:488px;height:156px;border:1px solid #b4b4b4;background:#f6f6f6"></div><table class="grid" id="tab1" style="left:1357px;top:268px;width:485px"><colgroup><col style="width:36px"><col style="width:74px"><col style="width:62px"><col style="width:62px"><col style="width:63px"><col style="width:63px"><col style="width:62px"><col style="width:63px"></colgroup><tr style="height:45px"><th></th><th><span class="c">Member</span></th><th><span class="c h2">N<br>[kN]</span></th><th><span class="c h2">Vy<br>[kN]</span></th><th><span class="c h2">Vz<br>[kN]</span></th><th><span class="c h2">Mx<br>[kNm]</span></th><th><span class="c h2">My<br>[kNm]</span></th><th><span class="c h2">Mz<br>[kNm]</span></th></tr><tr style="height:36px;background:#fff;"><td></td><td style=""><span class="c n">B / Begin</span></td><td style=""><span class="c">0.0</span></td><td style=""><span class="c">0.0</span></td><td style=""><span class="c">10.0</span></td><td style=""><span class="c">-15.0</span></td><td style=""><span class="c">0.0</span></td><td style=""><span class="c">0.0</span></td></tr><tr style="height:36px;background:#fff;"><td></td><td style=""><span class="c n">B / End</span></td><td style=""><span class="c">0.0</span></td><td style=""><span class="c">0.0</span></td><td style=""><span class="c">10.0</span></td><td style=""><span class="c">-15.0</span></td><td style=""><span class="c">0.0</span></td><td style=""><span class="c">0.0</span></td></tr><tr style="height:36px;background:#e0e0e0;"><td><svg style="display:block;margin-left:12px" width="12" height="16"><path d="M3 2.4 L9.6 8.1 L3 13.7" fill="none" stroke="#333" stroke-width="1.9"/></svg></td><td style="outline:1.5px solid #f08030;outline-offset:-1.5px;background:#e6eaee;"><span class="c n">B1 / End</span></td><td style=""><span class="c">0.0</span></td><td style=""><span class="c">0.0</span></td><td style=""><span class="c">-20.0</span></td><td style=""><span class="c">0.0</span></td><td style=""><span class="c">30.0</span></td><td style=""><span class="c">0.0</span></td></tr></table><div class="hl" style="left:1347px;top:376px;width:509px;height:57px"></div><span class="t" style="left:1345.3px;top:469px;font-size:15px;color:#444;letter-spacing:-0.16px;">Values in disabled cells are not taken into account in CBFEM</span><span class="t" style="left:1345.3px;top:489px;font-size:15px;color:#444;letter-spacing:-0.05px;">analysis. Members can be loaded only by that components of</span><span class="t" style="left:1345.3px;top:509px;font-size:15px;color:#444;letter-spacing:0.07px;">internal forces which are defined in member "Model type".</span><span class="t" style="left:1345.2px;top:825px;font-size:18px;font-weight:700;color:#3a3a3a;letter-spacing:-0.22px;">Unbalanced forces</span><table class="grid" id="tab2" style="left:1357px;top:858px;width:413px"><colgroup><col style="width:69px"><col style="width:69px"><col style="width:69px"><col style="width:68px"><col style="width:69px"><col style="width:69px"></colgroup><tr style="height:45px"><th><span class="c h2">X<br>[kN]</span></th><th><span class="c h2">Y<br>[kN]</span></th><th><span class="c h2">Z<br>[kN]</span></th><th><span class="c h2">Mx<br>[kNm]</span></th><th><span class="c h2">My<br>[kNm]</span></th><th><span class="c h2">Mz<br>[kNm]</span></th></tr><tr style="height:37px;background:#fff"><td style=""><span class="c">0.0</span></td><td style=""><span class="c">0.0</span></td><td style=""><span class="c">0.0</span></td><td style=""><span class="c">0.0</span></td><td style=""><span class="c">0.0</span></td><td style=""><span class="c">0.0</span></td></tr></table><div id="status"><svg class="abs" style="left:0;top:0" width="1920" height="44">
<rect width="1920" height="44" fill="#121212"/><rect width="1920" height="44" fill="#6a6a6a" filter="url(#brush)"/>
<rect width="1920" height="44" fill="url(#tbv)"/></svg></div><span class="t" style="left:30.3px;top:993px;font-size:15px;font-weight:700;color:#8a8a8a;letter-spacing:-0.45px;">Design code:</span><span class="t" style="left:125.0px;top:993px;font-size:15px;font-weight:700;color:#fff;letter-spacing:-0.45px;transform:scaleX(0.966);transform-origin:0 0;">EN</span><span class="t" style="left:170.3px;top:993px;font-size:15px;font-weight:700;color:#8a8a8a;letter-spacing:-0.45px;transform:scaleX(0.976);transform-origin:0 0;">Analysis:</span><span class="t" style="left:237.7px;top:993px;font-size:15px;font-weight:700;color:#fff;letter-spacing:-0.39px;">Stress, strain</span><span class="t" style="left:353.3px;top:993px;font-size:15px;font-weight:700;color:#8a8a8a;letter-spacing:-0.30px;">Load effects:</span><span class="t" style="left:449.1px;top:993px;font-size:15px;font-weight:700;color:#fff;letter-spacing:-0.07px;">In equilibrium</span><span class="t" style="left:572.4px;top:993px;font-size:15px;font-weight:700;color:#8a8a8a;letter-spacing:-0.45px;">Units:</span><span class="t" style="left:623.4px;top:993px;font-size:15px;font-weight:700;color:#fff;letter-spacing:0.31px;">mm</span><span class="t" style="left:1765.9px;top:993px;font-size:15px;color:#f26f21;letter-spacing:-0.45px;transform:scaleX(0.989);transform-origin:0 0;">www.</span><span class="t" style="left:1800.5px;top:993px;font-size:15px;color:#fff;letter-spacing:0.08px;">ideastatica</span><span class="t" style="left:1873.5px;top:993px;font-size:15px;color:#f26f21;letter-spacing:-0.21px;">.com</span></body></html>
